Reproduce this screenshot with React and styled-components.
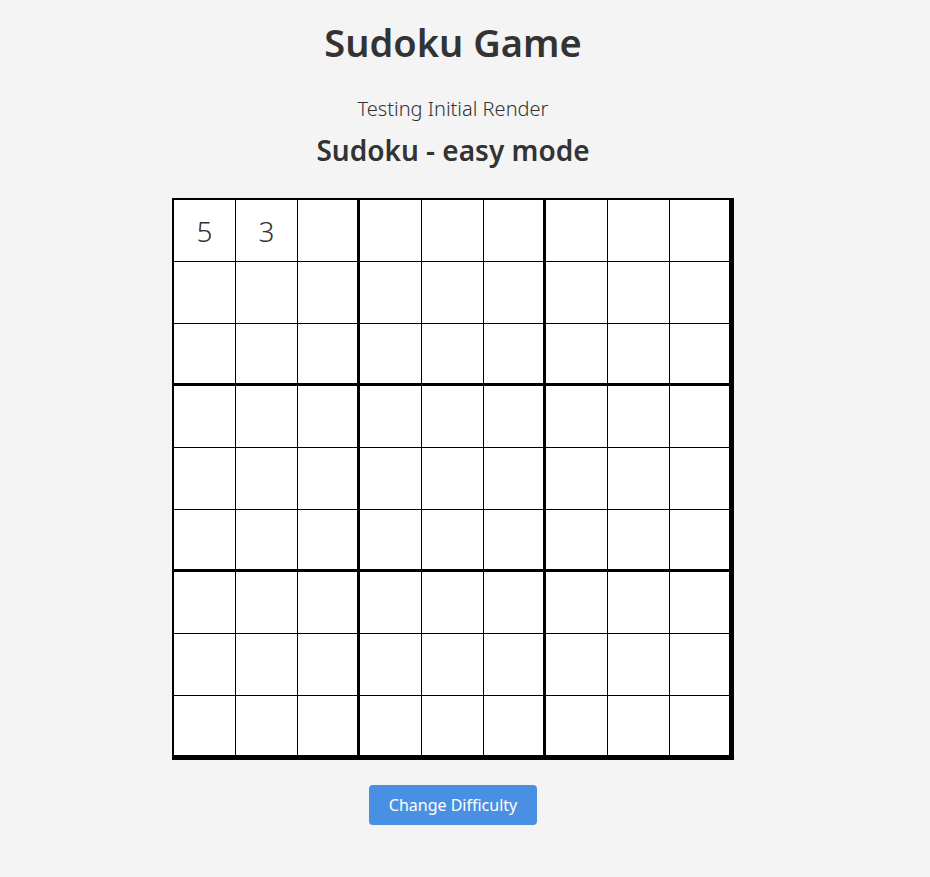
import React, {useState} from 'react'
import styled, {createGlobalStyle} from 'styled-components'

const GlobalStyle = createGlobalStyle`
  body {
    margin: 0;
    background-color: #f4f4f4;
    font-family: "Noto Sans", "Open Sans", sans-serif;
    color: #333;
  }
`

const Page = styled.div`
  display: flex;
  flex-direction: column;
  align-items: center;
  padding-right: 24px;
`

const Title = styled.h1`
  font-size: 38px;
  font-weight: 600;
  line-height: 48px;
  margin: 18px 0 0;
`

const Status = styled.p`
  font-size: 20px;
  font-weight: 300;
  line-height: 24px;
  margin: 31px 0 0;
`

const Mode = styled.h2`
  font-size: 28px;
  font-weight: 600;
  line-height: 36px;
  margin: 11px 0 0;
`

const Board = styled.div`
  display: grid;
  grid-template-columns: repeat(9, 62px);
  grid-auto-rows: 62px;
  border: 2px solid #000;
  margin-top: 30px;
`

const Cell = styled.div`
  box-sizing: border-box;
  background: #fff;
  border-right: ${p => (p.$thickRight ? 3 : 1)}px solid #000;
  border-bottom: ${p => (p.$thickBottom ? 3 : 1)}px solid #000;
  display: flex;
  align-items: center;
  justify-content: center;
  font-size: 28px;
  font-weight: 300;
  color: #333;
`

const Button = styled.button`
  margin-top: 25px;
  padding: 0 20px;
  height: 40px;
  white-space: nowrap;
  background-color: #4a90e2;
  color: #fff;
  border: none;
  border-radius: 4px;
  font-family: inherit;
  font-size: 16px;
  cursor: pointer;
`

const initial = [
  [5, 3, 0, 0, 0, 0, 0, 0, 0],
  ...Array.from({length: 8}, () => Array(9).fill(0))
]

function App() {
  const [board] = useState(initial)
  const [difficulty, setDifficulty] = useState('easy')

  return (
    <Page>
      <GlobalStyle />
      <Title>Sudoku Game</Title>
      <Status>Testing Initial Render</Status>
      <Mode>Sudoku - {difficulty} mode</Mode>
      <Board>
        {board.map((row, r) =>
          row.map((val, c) => (
            <Cell key={`${r}-${c}`} $thickRight={c % 3 === 2} $thickBottom={r % 3 === 2}>
              {val !== 0 ? val : ''}
            </Cell>
          ))
        )}
      </Board>
      <Button onClick={() => setDifficulty(d => (d === 'easy' ? 'hard' : 'easy'))}>
        Change Difficulty
      </Button>
    </Page>
  )
}

export default App
